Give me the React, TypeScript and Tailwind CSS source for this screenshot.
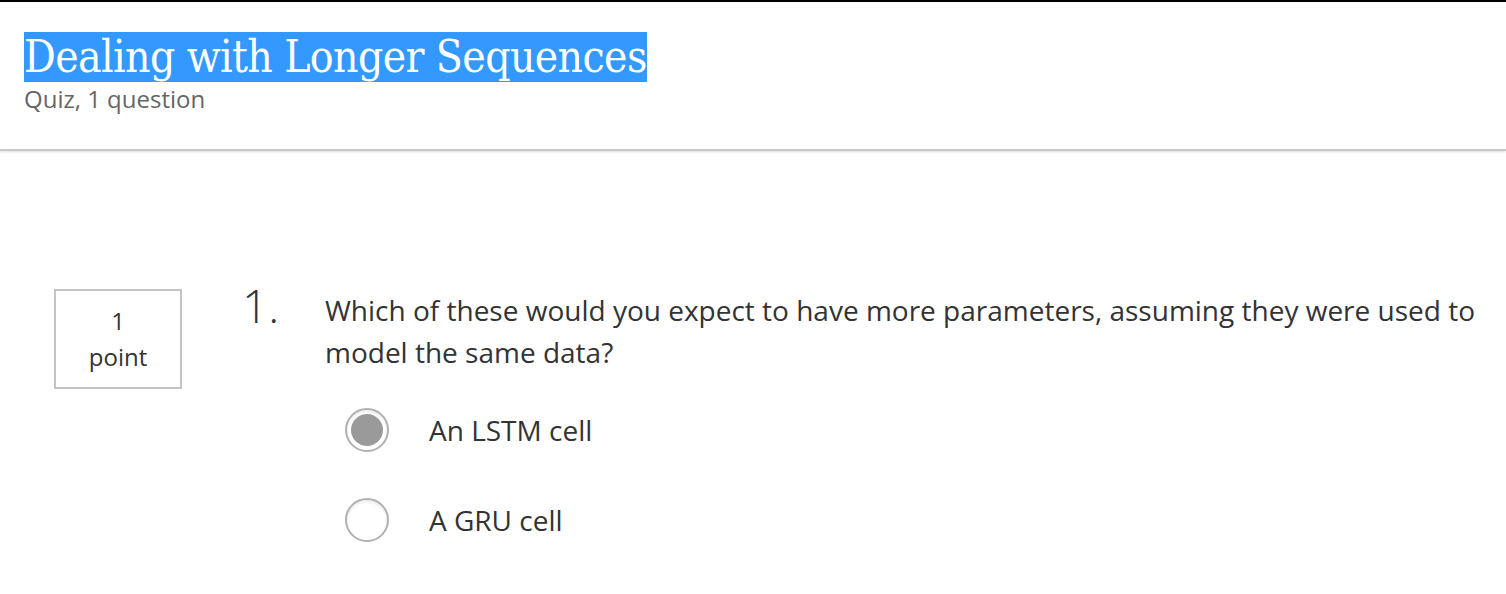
export default function App() {
    const options = [
        { label: "An LSTM cell", checked: true },
        { label: "A GRU cell", checked: false },
    ];

    return (
        <div className="w-[1506px] h-[594px] bg-white overflow-hidden border-t-2 border-black" style={{ fontFamily: "'Open Sans', sans-serif" }}>
            <header className="h-[149px] border-b-2 border-[#c8c8c8] shadow-[0_1px_2px_rgba(0,0,0,0.12)] pl-6 pt-[30px]">
                <h1 className="inline-block bg-[#3399ff] text-white text-[44px] leading-[50px] tracking-[-0.6px]" style={{ fontFamily: "'DejaVu Serif Condensed', 'Liberation Serif', serif" }}>
                    Dealing with Longer Sequences
                </h1>
                <div className="text-[24px] leading-[30px] text-[#666] mt-[2px]">Quiz, 1 question</div>
            </header>

            <main className="flex pt-[138px] pl-[54px]">
                <div className="w-[128px] h-[100px] border-2 border-[#c4c4c4] flex flex-col items-center justify-center text-[24px] leading-[36px] text-[#333]">
                    <span>1</span>
                    <span>point</span>
                </div>
                <div className="flex flex-col ml-[60px] -mt-[10px]">
                    <div className="flex">
                        <span className="w-[83px] text-[46px] font-light leading-[52px] text-[#333]">1.</span>
                        <p className="text-[28px] leading-[42px] text-[#333] pt-[10px] w-[1170px]">
                            Which of these would you expect to have more parameters, assuming they were used to model the same data?
                        </p>
                    </div>
                    <div className="flex flex-col gap-[46px] pl-[103px] mt-[35px]">
                        {options.map((option) => (
                            <label key={option.label} className="flex items-center gap-[40px]">
                                <span className="w-[44px] h-[44px] rounded-full border-2 border-[#b0b0b0] bg-white shadow-[inset_0_2px_3px_rgba(0,0,0,0.08)] flex items-center justify-center">
                                    {option.checked && <span className="w-[32px] h-[32px] rounded-full bg-[#9a9a9a]" />}
                                </span>
                                <span className="text-[28px] leading-[42px] text-[#333]">{option.label}</span>
                            </label>
                        ))}
                    </div>
                </div>
            </main>
        </div>
    );
}
